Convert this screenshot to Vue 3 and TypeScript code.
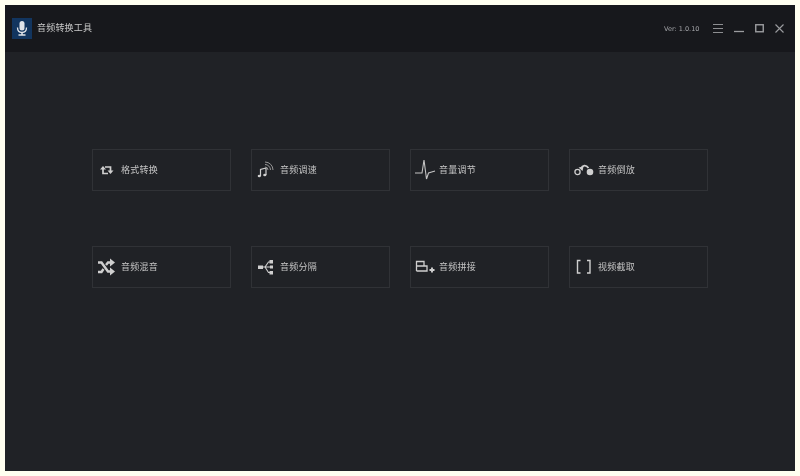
<template>
  <div class="window">
    <header class="titlebar">
      <div class="logo">
        <svg width="20" height="21" viewBox="0 0 20 21">
          <rect x="7.500" y="3" width="5" height="9.500" rx="2.500" fill="#dfe3e9" />
          <path d="M5.500 9.500c0 3.200 2 5 4.500 5s4.500-1.800 4.500-5" fill="none" stroke="#dfe3e9" stroke-width="1.300" />
          <path d="M10 14.500V16.500M6.500 17h7" stroke="#dfe3e9" stroke-width="1.500" />
        </svg>
      </div>
      <span class="title">音频转换工具</span>
      <span class="version">Ver: 1.0.10</span>
      <div class="controls">
        <svg width="10" height="11" viewBox="0 0 10 11">
          <path d="M0 1.500h10M0 5.500h10M0 9.500h10" stroke="#8d8e91" stroke-width="1" />
        </svg>
        <svg width="10" height="11" viewBox="0 0 10 11">
          <path d="M0 8.500h10" stroke="#9b9c9f" stroke-width="1.300" />
        </svg>
        <svg width="9" height="11" viewBox="0 0 9 11">
          <rect x="0.750" y="1.750" width="7.500" height="7" fill="none" stroke="#9b9c9f" stroke-width="1.400" />
        </svg>
        <svg width="9" height="11" viewBox="0 0 9 11">
          <path d="M0.500 1.500l8 8M8.500 1.500l-8 8" stroke="#9b9c9f" stroke-width="1.100" />
        </svg>
      </div>
    </header>
    <main class="content">
      <div class="tools">
        <div v-for="tool in tools" :key="tool.name" class="tool">
          <svg class="tool-icon" width="24" height="24" viewBox="0 0 24 24" v-html="tool.icon"></svg>
          <span class="tool-name">{{ tool.name }}</span>
        </div>
      </div>
    </main>
  </div>
</template>

<script setup lang="ts">
const c = '#cfcfcf'

const tools: { name: string; icon: string }[] = [
  {
    name: '格式转换',
    icon: `<path d="M13 15.500H8V10" fill="none" stroke="${c}" stroke-width="1.700"/>
      <path d="M5 11.500L8 8L11 11.500Z" fill="${c}"/>
      <path d="M10 9H15.500V14" fill="none" stroke="${c}" stroke-width="1.700"/>
      <path d="M12.500 12.500L15.500 16L18.500 12.500Z" fill="${c}"/>`
  },
  {
    name: '音频调速',
    icon: `<path d="M6.500 18V11.500L12 10V17" fill="none" stroke="${c}" stroke-width="1.200"/>
      <ellipse cx="5.300" cy="18" rx="1.600" ry="1.300" fill="${c}"/>
      <ellipse cx="10.800" cy="17" rx="1.600" ry="1.300" fill="${c}"/>
      <path d="M14 12A3 3 0 0 0 11 9M16.500 12A5.500 5.500 0 0 0 11 6.500M19 12A8 8 0 0 0 11 4" fill="none" stroke="#969696" stroke-width="1"/>`
  },
  {
    name: '音量调节',
    icon: `<path d="M2 15H9L11 2L13.500 21L15.500 15L22 13" fill="none" stroke="#c4c4c4" stroke-width="1.100"/>`
  },
  {
    name: '音频倒放',
    icon: `<circle cx="5.500" cy="14" r="2.600" fill="none" stroke="${c}" stroke-width="1.300"/>
      <circle cx="18" cy="14" r="3.300" fill="${c}"/>
      <path d="M9 10.500C10.500 7 14 6.500 16.500 10" fill="none" stroke="${c}" stroke-width="1.800"/>
      <path d="M6.500 9.500L10.500 13L11.500 8.500Z" fill="${c}"/>`
  },
  {
    name: '音频混音',
    icon: `<path d="M3 7.500H6.500L13 16.500H16M3 17H6.500L8.500 14M11 10L13 7.500H16" fill="none" stroke="${c}" stroke-width="2.400"/>
      <path d="M15 3.500L20 7.500L15 11.500ZM15 12.500L20 16.500L15 20.500Z" fill="${c}"/>`
  },
  {
    name: '音频分隔',
    icon: `<rect x="4" y="10.500" width="5" height="3.500" fill="${c}"/>
      <path d="M9 12H19M11 12L14.500 7H17M11 12L14.500 17.500H17" fill="none" stroke="${c}" stroke-width="1.100"/>
      <rect x="15.500" y="5" width="3.500" height="3.500" fill="${c}"/>
      <rect x="16" y="10.500" width="3" height="3" fill="${c}"/>
      <rect x="15.500" y="16" width="3.500" height="3.500" fill="${c}"/>`
  },
  {
    name: '音频拼接',
    icon: `<path d="M3.500 16V6.500H11V11M3.500 11H14V16H3.500" fill="none" stroke="${c}" stroke-width="1.300"/>
      <path d="M19 12.500V17.500M16.500 15H21.500" stroke="${c}" stroke-width="1.900"/>`
  },
  {
    name: '视频截取',
    icon: `<path d="M8.500 5.500H5.500V18H8.500M15 5.500H18V18H15" fill="none" stroke="${c}" stroke-width="1.400"/>`
  }
]
</script>

<style scoped>
.window {
  width: 790px;
  height: 466px;
  margin: 5px;
  display: flex;
  flex-direction: column;
  background: #202226;
  font-family: "Noto Sans CJK SC", "DejaVu Sans", sans-serif;
}

.titlebar {
  height: 47px;
  display: flex;
  align-items: center;
  background: #17181c;
  color: #c8c8c8;
}

.logo {
  width: 20px;
  height: 21px;
  margin-left: 7px;
  background: #12355f;
}

.title {
  margin: 0 0 2px 5px;
  font-size: 9px;
  letter-spacing: 0.200px;
  will-change: transform;
}

.version {
  margin-left: auto;
  font-family: "DejaVu Sans", sans-serif;
  font-size: 6.500px;
  color: #a5a6aa;
  will-change: transform;
}

.controls {
  display: flex;
  align-items: center;
  gap: 11px;
  margin: 0 11px 0 14px;
}

.content {
  flex: 1;
  padding: 97px 0 0 87px;
}

.tools {
  display: grid;
  grid-template-columns: repeat(4, 139px);
  grid-auto-rows: 42px;
  column-gap: 20px;
  row-gap: 55px;
}

.tool {
  display: flex;
  align-items: center;
  border: 1px solid #303236;
  box-sizing: border-box;
  color: #c4c4c4;
}

.tool-icon {
  flex: none;
  margin-left: 2px;
  margin-right: 2px;
}

.tool-name {
  margin-bottom: 2px;
  font-size: 9px;
  letter-spacing: 0.250px;
  will-change: transform;
}
</style>

<style>
html,
body {
  background: #fffff0;
}
</style>
